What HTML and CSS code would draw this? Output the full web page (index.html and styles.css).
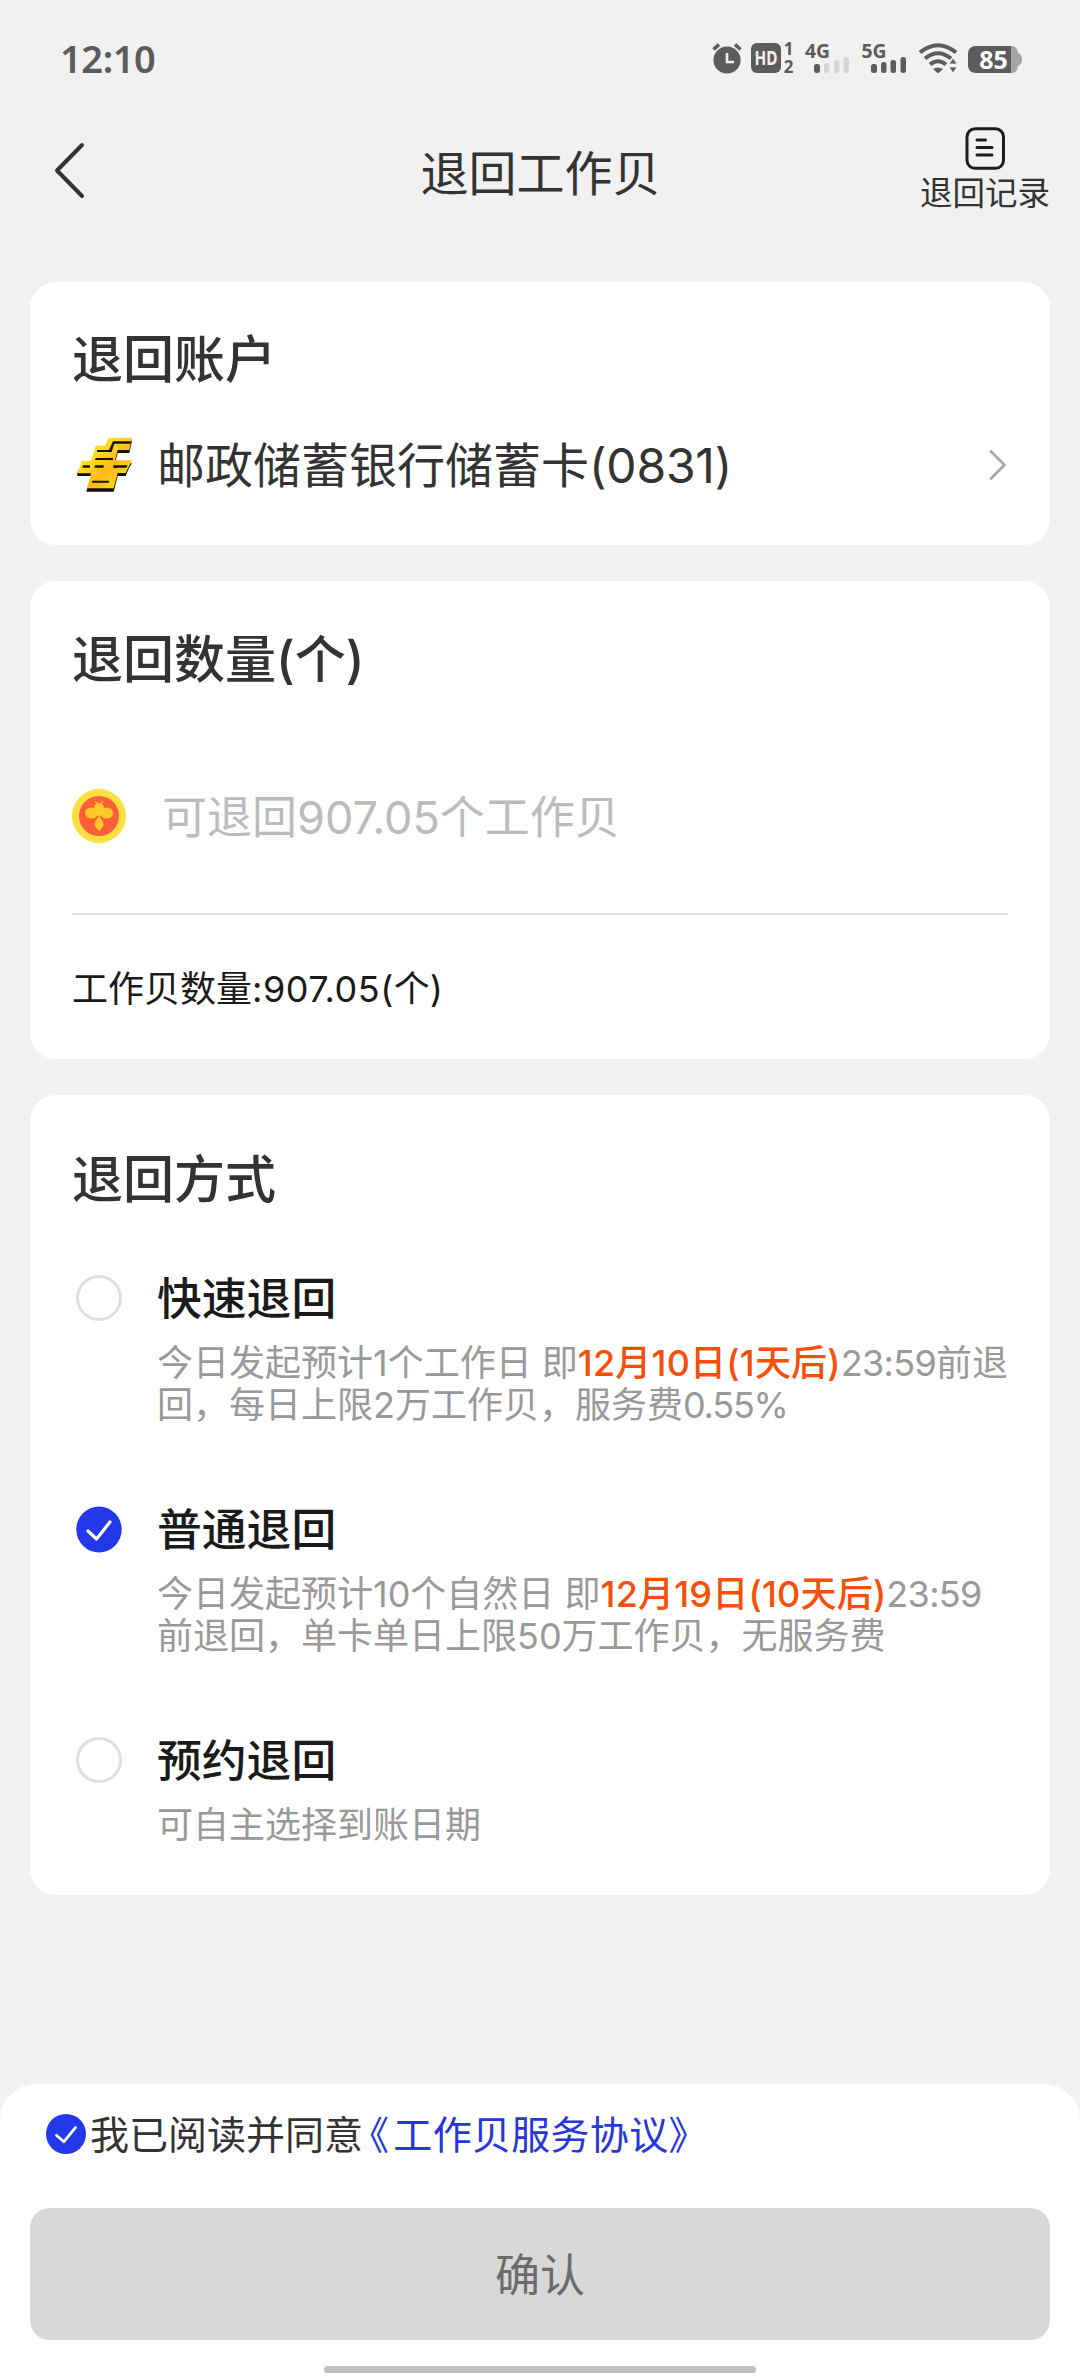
FILE: index.html
```html
<!DOCTYPE html>
<html lang="zh-CN">
<head>
<meta charset="utf-8">
<title>退回工作贝</title>
<link rel="stylesheet" href="styles.css">
</head>
<body>
<div class="screen">
  <div class="status">
    <span class="time">12:10</span>
    <svg class="status-icons" width="310" height="60" viewBox="0 -13 310 60" fill="#5c5c5c">
      <circle cx="15" cy="19" r="13.6"/>
      <path d="M1.5 8.500 7 3.500M28.500 8.500 23 3.500" stroke="#5c5c5c" stroke-width="3.600" fill="none"/>
      <path d="M15 12v9h7" stroke="#f1f1f1" stroke-width="2.600" fill="none"/>
      <rect x="39" y="2" width="30" height="30" rx="6"/>
      <text x="42.500" y="24" class="hd" textLength="23" lengthAdjust="spacingAndGlyphs">HD</text>
      <text x="76.500" y="14" class="sim" text-anchor="middle">1</text>
      <text x="76.500" y="31.500" class="sim" text-anchor="middle">2</text>
      <text x="93" y="16.500" class="net" textLength="25" lengthAdjust="spacingAndGlyphs">4G</text>
      <rect x="102" y="23" width="6" height="9" rx="2.500"/>
      <g fill="#d6d6d6"><rect x="112" y="22" width="5.500" height="10" rx="2.500"/><rect x="122" y="19" width="5.500" height="13" rx="2.500"/><rect x="131.500" y="16" width="5.500" height="16" rx="2.500"/></g>
      <text x="149.500" y="16.500" class="net" textLength="25" lengthAdjust="spacingAndGlyphs">5G</text>
      <rect x="159" y="23" width="6" height="9" rx="2.500"/><rect x="169" y="21" width="5.500" height="11" rx="2.500"/><rect x="178.500" y="19" width="5.500" height="13" rx="2.500"/><rect x="188.500" y="16" width="5.500" height="16" rx="2.500"/>
      <g fill="none" stroke="#5c5c5c" stroke-width="4">
        <path d="M208 11.500Q226 -3 244 11.500"/>
        <path d="M213 17.500Q226 7 239 17.500"/>
        <path d="M218 23.500Q226 17 234 23.500"/>
      </g>
      <path d="M221 28q5-3 10 0l-5 4.500z"/>
      <path d="M237 23h8l-4-6zM237 26h8l-4 6z" stroke="#f1f1f1" stroke-width=".8"/>
      <path d="M300 5h-2v27h2c3.500 0 5.500-3 6-7 2-.5 4-2.500 4-6.500s-2-6-4-6.500c-.5-4-2.500-7-6-7z" fill="#a6a6a6"/>
      <path d="M264 5h35v27h-35c-5 0-8-3-8-8V13c0-5 3-8 8-8z"/>
      <text x="281.500" y="27.500" class="batt" text-anchor="middle">85</text>
    </svg>
  </div>

  <header class="header">
    <svg class="back" width="34" height="60" viewBox="0 0 34 60" fill="none" stroke="#333" stroke-width="4" stroke-linecap="round" stroke-linejoin="round"><path d="M30 5 5 30.500 30 56"/></svg>
    <h1 class="title">退回工作贝</h1>
    <div class="record">
      <svg width="40" height="43" viewBox="0 0 40 43" fill="none" stroke="#1c1c1c" stroke-width="3" stroke-linecap="round"><rect x="2" y="1.800" width="36.500" height="39.500" rx="8"/><path d="M12 13h8.500M12 20.500h15M12 28h15"/></svg>
      <span>退回记录</span>
    </div>
  </header>

  <section class="card account">
    <h2>退回账户</h2>
    <div class="bank-row">
      <svg class="bank-logo" width="58" height="58" viewBox="49 33 174 174">
        <defs><linearGradient id="gold" x1="0" y1="0" x2="1" y2="1"><stop offset="0" stop-color="#ff9f1a"/><stop offset=".3" stop-color="#ffe01a"/><stop offset=".6" stop-color="#ffb91a"/><stop offset="1" stop-color="#f8ee10"/></linearGradient></defs>
        <path fill="#111006" d="M148 47H217L209 84H174L166 115H217L208 129L198 153H174L162 200H80L83 190L94 153H53V145L66 117H94L108 71H136z"/>
        <path fill="url(#gold)" d="M148 38H217L209 75H174L166 106H217L198 144H174L162 190H82L94 145H54L66 108H94L108 62H136z"/>
        <path fill="#17140a" d="M160 49H214V56H164L156 81H112V75H148zM108 99H160V105H106zM70 121H91V128H68zM106 121H132V128H104zM161 121H204L200 128H174L162 130z M98 167H148V173H96z"/>
      </svg>
      <span class="bank-name">邮政储蓄银行储蓄卡<span class="card-no">(0831)</span></span>
      <svg class="chevron" width="18" height="32" viewBox="0 0 18 32" fill="none" stroke="#a8a8a8" stroke-width="2.800" stroke-linecap="round" stroke-linejoin="round"><path d="M2 2.500 15.500 16 2 29.500"/></svg>
    </div>
  </section>

  <section class="card amount">
    <h2>退回数量(个)</h2>
    <div class="amount-row">
      <svg class="coin" width="54" height="56" viewBox="0 0 54 56"><circle cx="27" cy="28" r="27" fill="#fddf42"/><circle cx="27" cy="28" r="20" fill="#ff5f38"/>
        <g fill="#ffc928"><ellipse cx="19.500" cy="25" rx="6.500" ry="5.500"/><ellipse cx="34.500" cy="25" rx="6.500" ry="5.500"/><ellipse cx="27" cy="20.500" rx="5" ry="5.500"/><path d="M22 22h10l-5 7.500zM27 28.500q5 5 4.500 8.500-1 3-4.500 6-3.500-3-4.500-6-.5-3.500 4.500-8.500z"/><path d="M23.500 13l2 4M30.500 13l-2 4" stroke="#ffc928" stroke-width="1.300"/></g></svg>
      <span class="placeholder">可退回<span class="num">907.05</span>个工作贝</span>
    </div>
    <div class="balance">工作贝数量<span class="num">:907.05(</span>个<span class="num">)</span></div>
  </section>

  <section class="card methods">
    <h2>退回方式</h2>
    <div class="option">
      <span class="radio"></span>
      <div class="option-body">
        <h3>快速退回</h3>
        <p>今日发起预计1个工作日 即<em>12月10日(1天后)</em><span class="clock">23:59</span>前退<br>回，每日上限2万工作贝，服务费<span class="rate">0.55%</span></p>
      </div>
    </div>
    <div class="option">
      <svg class="tick" width="46" height="47" viewBox="0 0 46 47"><ellipse cx="23" cy="23.500" rx="22.700" ry="23" fill="#2338e8"/><path d="M12 25l8.500 8L34 16" fill="none" stroke="#fff" stroke-width="3.200" stroke-linecap="round" stroke-linejoin="round"/></svg>
      <div class="option-body">
        <h3>普通退回</h3>
        <p>今日发起预计10个自然日 即<em>12月19日(10天后)</em><span class="clock">23:59</span><br>前退回，单卡单日上限50万工作贝，无服务费</p>
      </div>
    </div>
    <div class="option">
      <span class="radio"></span>
      <div class="option-body">
        <h3>预约退回</h3>
        <p>可自主选择到账日期</p>
      </div>
    </div>
  </section>

  <footer class="footer">
    <div class="agree">
      <svg width="40" height="40" viewBox="0 0 46 46"><circle cx="23" cy="23" r="23" fill="#2338e8"/><path d="M12 24.500l8.500 7.500L34 15.500" fill="none" stroke="#fff" stroke-width="3.200" stroke-linecap="round" stroke-linejoin="round"/></svg>
      <span>我已阅读并同意<a class="terms"><span class="quote">《</span>工作贝服务协议》</a></span>
    </div>
    <button class="confirm">确认</button>
    <div class="home-bar"></div>
  </footer>
</div>
</body>
</html>
```
FILE: styles.css
```css
* { box-sizing: border-box; margin: 0; padding: 0; }

body {
  background: #f1f1f1;
  color: #333;
  font-family: Inter, "Noto Sans CJK SC", sans-serif;
}

.screen {
  width: 1080px;
  height: 2376px;
  display: flex;
  flex-direction: column;
  overflow: hidden;
  white-space: nowrap;
}

.status {
  height: 116px;
  padding: 0 58px 0 60px;
  display: flex;
  align-items: center;
  justify-content: space-between;
}
.time {
  font: 600 38px/44px "Noto Sans", sans-serif;
  letter-spacing: -.4px;
  color: #5c5c5c;
}
.status-icons { display: block; font-family: "Noto Sans", sans-serif; font-weight: 700; }
.hd { font-size: 19px; fill: #f1f1f1; }
.sim { font-size: 17px; }
.net { font-size: 20px; }
.batt { font-size: 25px; fill: #fff; }

.header {
  height: 110px;
  margin-bottom: 56px;
  padding: 0 30px 0 52px;
  display: grid;
  grid-template-columns: 1fr auto 1fr;
  align-items: start;
}
.back { margin-top: 24px; }
.title {
  margin-top: 33px;
  padding-right: 21px;
  font-size: 48px;
  font-weight: 400;
  line-height: 50px;
}
.record {
  justify-self: end;
  margin-top: 11px;
  display: flex;
  flex-direction: column;
  align-items: center;
  font-size: 32.5px;
  line-height: 36px;
  gap: 6px;
}

.card {
  margin: 0 30px 36px;
  padding: 0 42px;
  background: #fff;
  border-radius: 26px;
}
.card h2 {
  font-size: 51px;
  font-weight: 500;
  line-height: 60px;
}

.account { height: 263px; padding-top: 48px; }
.bank-row {
  margin-top: 45px;
  height: 60px;
  padding-left: 4px;
  display: flex;
  align-items: center;
}
.bank-name { flex: 1; margin-left: 23px; padding-top: 2px; font-size: 48px; line-height: 60px; }
.card-no { letter-spacing: -.2px; }
.chevron { margin-right: 1px; }

.amount { height: 478px; padding-top: 49px; }
.amount-row {
  margin-top: 96px;
  height: 129px;
  padding-bottom: 67px;
  border-bottom: 2px solid #e1e1e1;
  display: flex;
  align-items: center;
  gap: 36px;
}
.placeholder { padding-top: 4px; font-size: 45px; line-height: 60px; color: #bbb; }
.balance { margin-top: 54px; font-size: 36px; line-height: 40px; color: #1a1a1a; }
.balance .num { letter-spacing: .5px; }

.methods { height: 800px; padding-top: 55px; }
.option { display: flex; align-items: flex-start; margin-bottom: 79px; padding-left: 4px; }
.methods h2 { margin-bottom: 64px; }
.radio {
  width: 46px;
  height: 46px;
  margin-top: 1px;
  border: 3px solid #dfdfdf;
  border-radius: 50%;
  flex: none;
}
.tick { flex: none; margin-top: 1px; }
.option-body { margin-left: 35px; }
.option h3 { font-size: 44.8px; font-weight: 500; line-height: 50px; color: #1a1a1a; }
.option p { margin-top: 18px; font-size: 36px; line-height: 42px; color: #999; }
.option em { font-style: normal; font-weight: 500; letter-spacing: .2px; color: #f5500a; }
.clock { letter-spacing: -.7px; }
.rate { letter-spacing: -1.2px; }

.footer {
  height: 292px;
  margin-top: 153px;
  padding: 30px 30px 0;
  background: #fff;
  border-radius: 36px 36px 0 0;
}
.agree { display: flex; align-items: center; height: 40px; padding-left: 16px; gap: 4px; font-size: 39px; line-height: 42px; }
.agree span { padding-top: 1px; }
.terms { color: #2536dc; margin-left: -13px; letter-spacing: .3px; }
.quote { margin-right: 4px; }
.confirm {
  display: block;
  width: 100%;
  height: 132px;
  margin-top: 54px;
  padding-top: 3px;
  border: 0;
  border-radius: 20px;
  background: #d8d8d8;
  color: #6b6b6b;
  font: 400 45px/60px Inter, "Noto Sans CJK SC", sans-serif;
}
.home-bar { width: 432px; height: 7px; margin: 26px auto 0; border-radius: 4px; background: #c0c0c0; }
```
